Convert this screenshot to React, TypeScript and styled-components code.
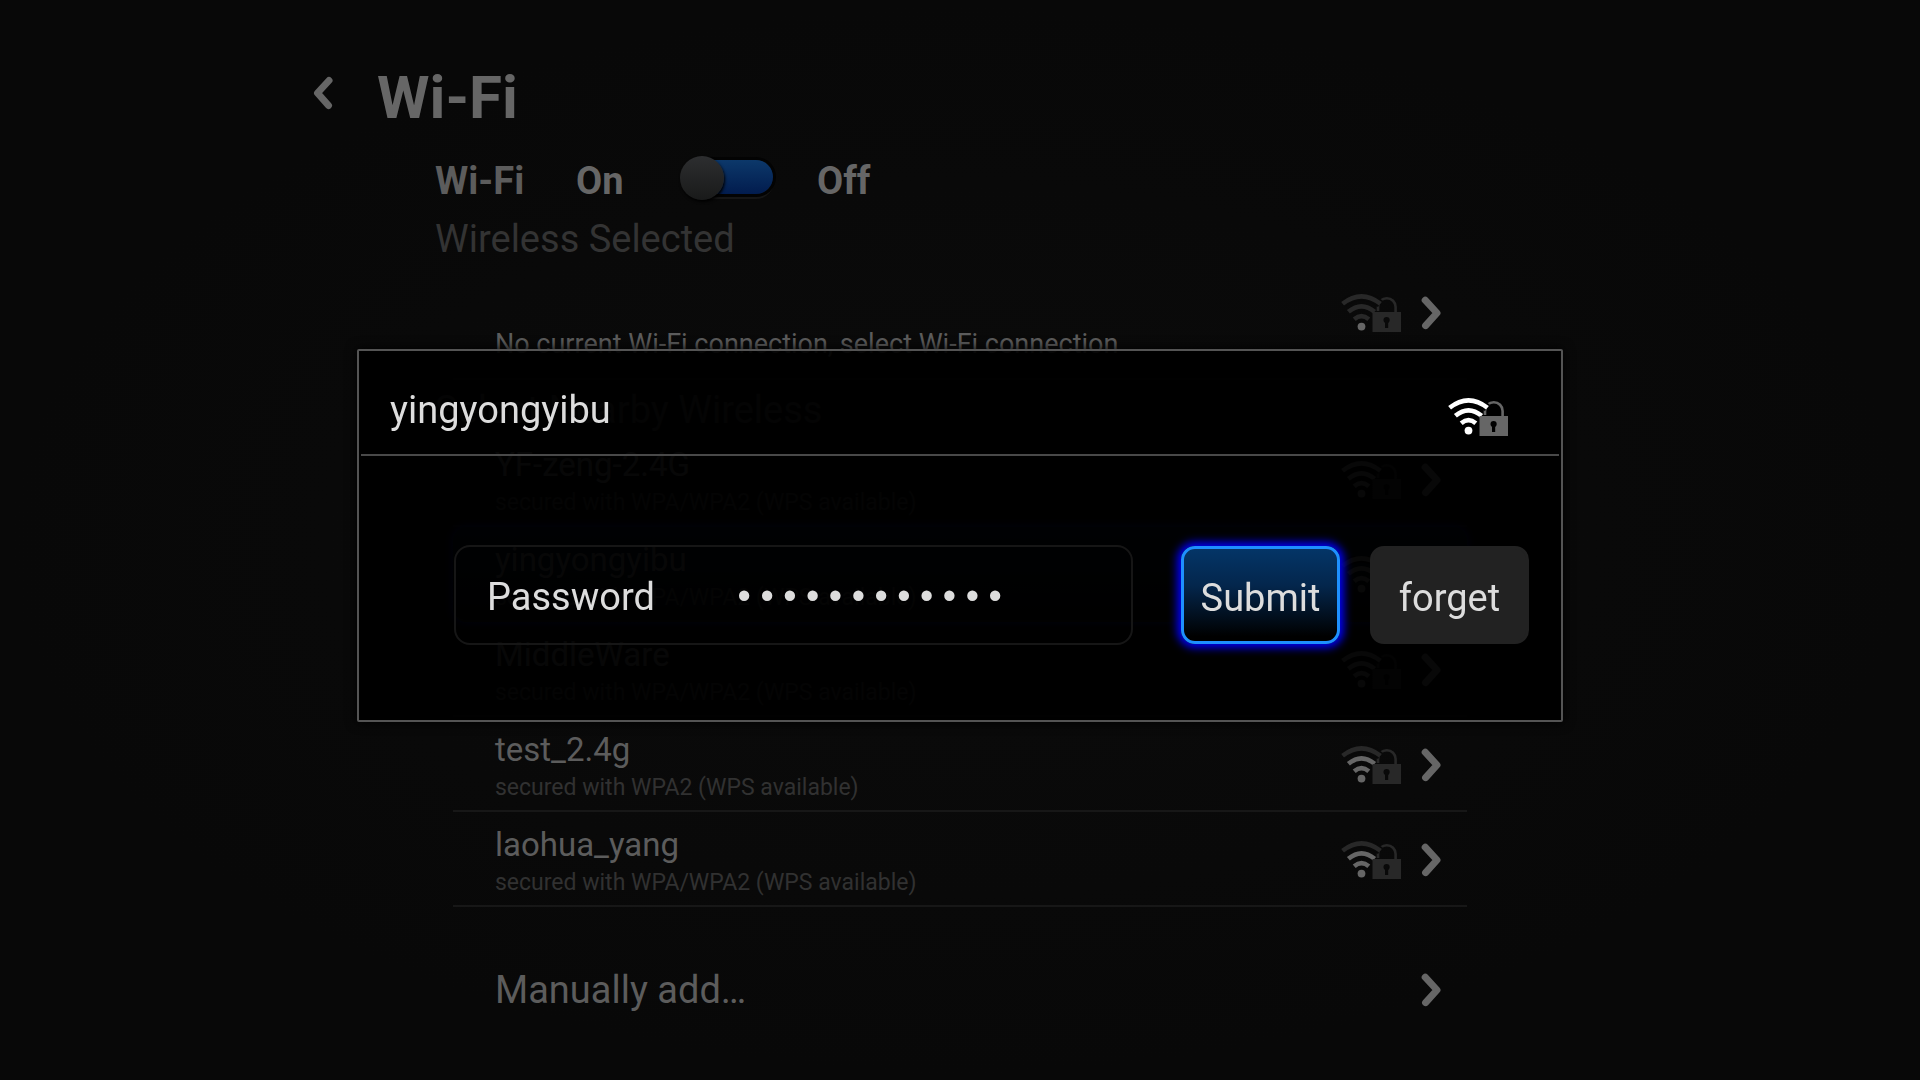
import React, { useState } from 'react';
import styled, { createGlobalStyle, css } from 'styled-components';

const GlobalStyle = createGlobalStyle`
  *, *::before, *::after { box-sizing: border-box; }
  body {
    margin: 0;
    background: #080808;
    font-family: Roboto, "Noto Sans", sans-serif;
    color: #5c5c5c;
  }
  button, input { font-family: inherit; }
`;

const Page = styled.main`
  min-height: 100vh;
  padding: 56px 16px 0;
  background: radial-gradient(ellipse at center, #0b0b0b 0%, #080808 70%);
`;

const Screen = styled.div`
  max-width: 1310px;
  margin: 0 auto;
`;

const Header = styled.header`
  display: flex;
  align-items: center;
  gap: 44px;
  height: 84px;
`;

const IconButton = styled.button`
  display: flex;
  padding: 0;
  border: 0;
  background: none;
  color: #666;
  cursor: pointer;
`;

const BackButton = styled(IconButton)`
  padding: 0 0 10px 8px;
`;

const Title = styled.h1`
  margin: 0;
  font-size: 60px;
  line-height: 84px;
  font-weight: 700;
  color: #666;
`;

const Content = styled.div`
  padding: 0 148px 0 130px;
`;

const PowerRow = styled.div`
  display: flex;
  align-items: center;
  height: 77px;
  padding-top: 4px;
  font-size: 38px;
  line-height: 44px;
  font-weight: 700;
  color: #666;
`;

const PowerName = styled.span`
  width: 141px;
  color: #5c5c5c;
`;

const PowerState = styled.span<{ $width?: number }>`
  width: ${(p) => (p.$width ? `${p.$width}px` : 'auto')};
`;

const Switch = styled.input`
  appearance: none;
  position: relative;
  display: flex;
  align-items: center;
  width: 95px;
  height: 45px;
  margin: 0 42px 6px 0;
  padding: 0;
  cursor: pointer;

  &::before {
    content: '';
    position: absolute;
    inset: 5px 2px 6px 4px;
    border-radius: 17px;
    background: linear-gradient(#0c386a, #021c4e);
    box-shadow: 0 0 0 3px #030303, 0 4px 0 1px #161616;
  }

  &::after {
    content: '';
    position: relative;
    width: 44px;
    height: 44px;
    border-radius: 50%;
    background: linear-gradient(#2d2e30, #191a1a);
    box-shadow: 1px 2px 3px #000;
  }
`;

const SectionTitle = styled.h2`
  margin: 0;
  font-size: 38px;
  line-height: 44px;
  font-weight: 400;
  color: #333;
`;

const Item = styled.div`
  display: flex;
  align-items: center;
  justify-content: space-between;
  height: 95px;
  margin-left: 18px;
  padding: 2px 26px 0 42px;
  border-bottom: 2px solid #171717;
`;

const CurrentItem = styled(Item)`
  align-items: flex-start;
  height: 119px;
  margin-bottom: 8px;
  padding-top: 33px;
`;

const ManualItem = styled(Item)`
  height: 164px;
  border-bottom: 0;
`;

const NetworkItem = styled(Item)<{ $focused?: boolean }>`
  ${(p) =>
    p.$focused &&
    css`
      border-radius: 14px;
      background: linear-gradient(rgba(0, 30, 70, 0.5), rgba(0, 0, 0, 0.2));
      box-shadow: 0 0 6px 2px #00106a;
    `}
`;

const List = styled.ul`
  list-style: none;
  margin: 0;
  padding: 0;
`;

const NetworkText = styled.div`
  padding-top: 4px;
`;

const NetworkName = styled.div`
  font-size: 33px;
  line-height: 42px;
`;

const NetworkSecurity = styled.div`
  font-size: 23px;
  line-height: 34px;
  color: #313131;
`;

const CurrentText = styled.p`
  margin: 32px 0 0;
  font-size: 27px;
  line-height: 36px;
`;

const ManualText = styled.span`
  font-size: 38px;
  line-height: 44px;
`;

const Trailing = styled.div`
  display: flex;
  align-items: center;
  gap: 19px;
`;

const Overlay = styled.div`
  position: fixed;
  inset: 0;
  display: flex;
  align-items: center;
  justify-content: center;
  padding-bottom: 9px;
`;

const Dialog = styled.form`
  width: min(1206px, 100%);
  border: 2px solid #545454;
  border-radius: 2px;
  background: rgba(0, 0, 0, 0.92);
  color: #ddd;
  box-shadow: 0 0 12px #000;
`;

const DialogHeader = styled.header`
  display: flex;
  align-items: center;
  justify-content: space-between;
  height: 105px;
  margin: 0 2px;
  padding: 28px 50px 0 29px;
  border-bottom: 2px solid #494949;
`;

const DialogTitle = styled.h2`
  margin: 0 0 14px;
  font-size: 38px;
  line-height: 44px;
  font-weight: 400;
`;

const DialogBody = styled.div`
  display: flex;
  align-items: center;
  padding: 89px 32px 75px 95px;
`;

const Field = styled.label`
  flex: 1;
  min-width: 0;
  display: flex;
  align-items: center;
  gap: 78px;
  height: 100px;
  margin-right: 48px;
  padding: 4px 32px 0 31px;
  border: 2px solid #161616;
  border-radius: 16px;
  font-size: 38px;
  line-height: 44px;
`;

const PasswordInput = styled.input`
  flex: 1;
  min-width: 0;
  padding: 4px 0 0;
  border: 0;
  outline: 0;
  background: none;
  color: #ddd;
  font-family: "Liberation Mono", monospace;
  font-size: 38px;
  line-height: 44px;
`;

const DialogButton = styled.button<{ $primary?: boolean }>`
  flex: none;
  width: 159px;
  height: 98px;
  padding: 6px 0 0;
  border: 3px solid #222;
  border-radius: 14px;
  background: #222;
  color: #ddd;
  font-size: 38px;
  line-height: 44px;
  cursor: pointer;

  & + & { margin-left: 30px; }

  ${(p) =>
    p.$primary &&
    css`
      border-color: #1e90ff;
      background: linear-gradient(#043567, #04264c 40%, #000 95%);
      box-shadow: 0 0 8px 4px #0000f4;
    `}
`;

function Chevron({ left = false }: { left?: boolean }) {
  return (
    <svg width="20" height="34" viewBox="0 0 20 34" fill="none" aria-hidden="true">
      <path
        d={left ? 'M16 4.5 L4.5 17 L15.5 29.5' : 'M4.2 4.2 L16 17 L4.6 29.6'}
        stroke="currentColor"
        strokeWidth="7"
        strokeLinecap="round"
        strokeLinejoin="round"
      />
    </svg>
  );
}

type SignalProps = { level: 1 | 2 | 3 | 4; bright?: boolean };

function SignalIcon({ level, bright = false }: SignalProps) {
  const on = bright ? '#fff' : '#666';
  const off = '#282828';
  const lock = bright ? '#666' : '#282828';
  const hole = bright ? '#000' : '#090909';
  return (
    <svg width="61" height="38" viewBox="0 0 61 38" fill="none" aria-label={`Signal ${level} of 4, secured`}>
      <path d="M37 17 V13 A8.8 8.8 0 0 1 54.6 13 V18" stroke={lock} strokeWidth="2.6" />
      <path d="M1.6 9.8 Q20.5 -5 39.4 9.8" stroke={hole} strokeWidth="8" />
      <path d="M1.6 9.8 Q20.5 -5 39.4 9.8" stroke={level > 3 ? on : off} strokeWidth="4.6" />
      <path d="M7.4 17.8 Q20.5 6.8 33.6 17.8" stroke={level > 2 ? on : off} strokeWidth="4.6" />
      <path d="M13.2 25.2 Q20.5 19 27.8 25.2" stroke={level > 1 ? on : off} strokeWidth="4.6" />
      <circle cx="20.5" cy="32.6" r="3.9" fill={on} />
      <path d="M31.5 18 H60 V38 H31.5 Z" fill={lock} />
      <circle cx="45.6" cy="26" r="3.1" fill={hole} />
      <path d="M44 26 H47.2 V34 H44 Z" fill={hole} />
    </svg>
  );
}

type Network = { name: string; security: string; level: 1 | 2 | 3 | 4; focused?: boolean };

const networks: Network[] = [
  { name: 'YF-zeng-2.4G', security: 'secured with WPA/WPA2 (WPS available)', level: 4 },
  { name: 'yingyongyibu', security: 'secured with WPA/WPA2 (WPS available)', level: 4, focused: true },
  { name: 'MiddleWare', security: 'secured with WPA/WPA2 (WPS available)', level: 4 },
  { name: 'test_2.4g', security: 'secured with WPA2 (WPS available)', level: 3 },
  { name: 'laohua_yang', security: 'secured with WPA/WPA2 (WPS available)', level: 3 },
];

export default function App() {
  const [password, setPassword] = useState('abcdefghijkl');
  return (
    <>
      <GlobalStyle />
      <Page>
        <Screen>
          <Header>
            <BackButton aria-label="Back">
              <Chevron left />
            </BackButton>
            <Title>Wi-Fi</Title>
          </Header>
          <Content>
            <PowerRow>
              <PowerName>Wi-Fi</PowerName>
              <PowerState $width={104}>On</PowerState>
              <Switch type="checkbox" role="switch" aria-label="Wi-Fi" />
              <PowerState>Off</PowerState>
            </PowerRow>
            <SectionTitle>Wireless Selected</SectionTitle>
            <CurrentItem>
              <CurrentText>No current Wi-Fi connection, select Wi-Fi connection</CurrentText>
              <Trailing>
                <SignalIcon level={1} />
                <IconButton aria-label="Open current connection">
                  <Chevron />
                </IconButton>
              </Trailing>
            </CurrentItem>
            <SectionTitle>Select Nearby Wireless</SectionTitle>
            <List>
              {networks.map((n) => (
                <li key={n.name}>
                  <NetworkItem $focused={n.focused}>
                    <NetworkText>
                      <NetworkName>{n.name}</NetworkName>
                      <NetworkSecurity>{n.security}</NetworkSecurity>
                    </NetworkText>
                    <Trailing>
                      <SignalIcon level={n.level} />
                      <IconButton aria-label={`Open ${n.name}`}>
                        <Chevron />
                      </IconButton>
                    </Trailing>
                  </NetworkItem>
                </li>
              ))}
            </List>
            <ManualItem>
              <ManualText>Manually add…</ManualText>
              <IconButton aria-label="Manually add a network">
                <Chevron />
              </IconButton>
            </ManualItem>
          </Content>
        </Screen>
      </Page>
      <Overlay>
        <Dialog role="dialog" aria-label="yingyongyibu" onSubmit={(e) => e.preventDefault()}>
          <DialogHeader>
            <DialogTitle>yingyongyibu</DialogTitle>
            <SignalIcon level={4} bright />
          </DialogHeader>
          <DialogBody>
            <Field>
              Password
              <PasswordInput type="password" value={password} onChange={(e) => setPassword(e.target.value)} />
            </Field>
            <DialogButton type="submit" $primary>
              Submit
            </DialogButton>
            <DialogButton type="button">forget</DialogButton>
          </DialogBody>
        </Dialog>
      </Overlay>
    </>
  );
}
